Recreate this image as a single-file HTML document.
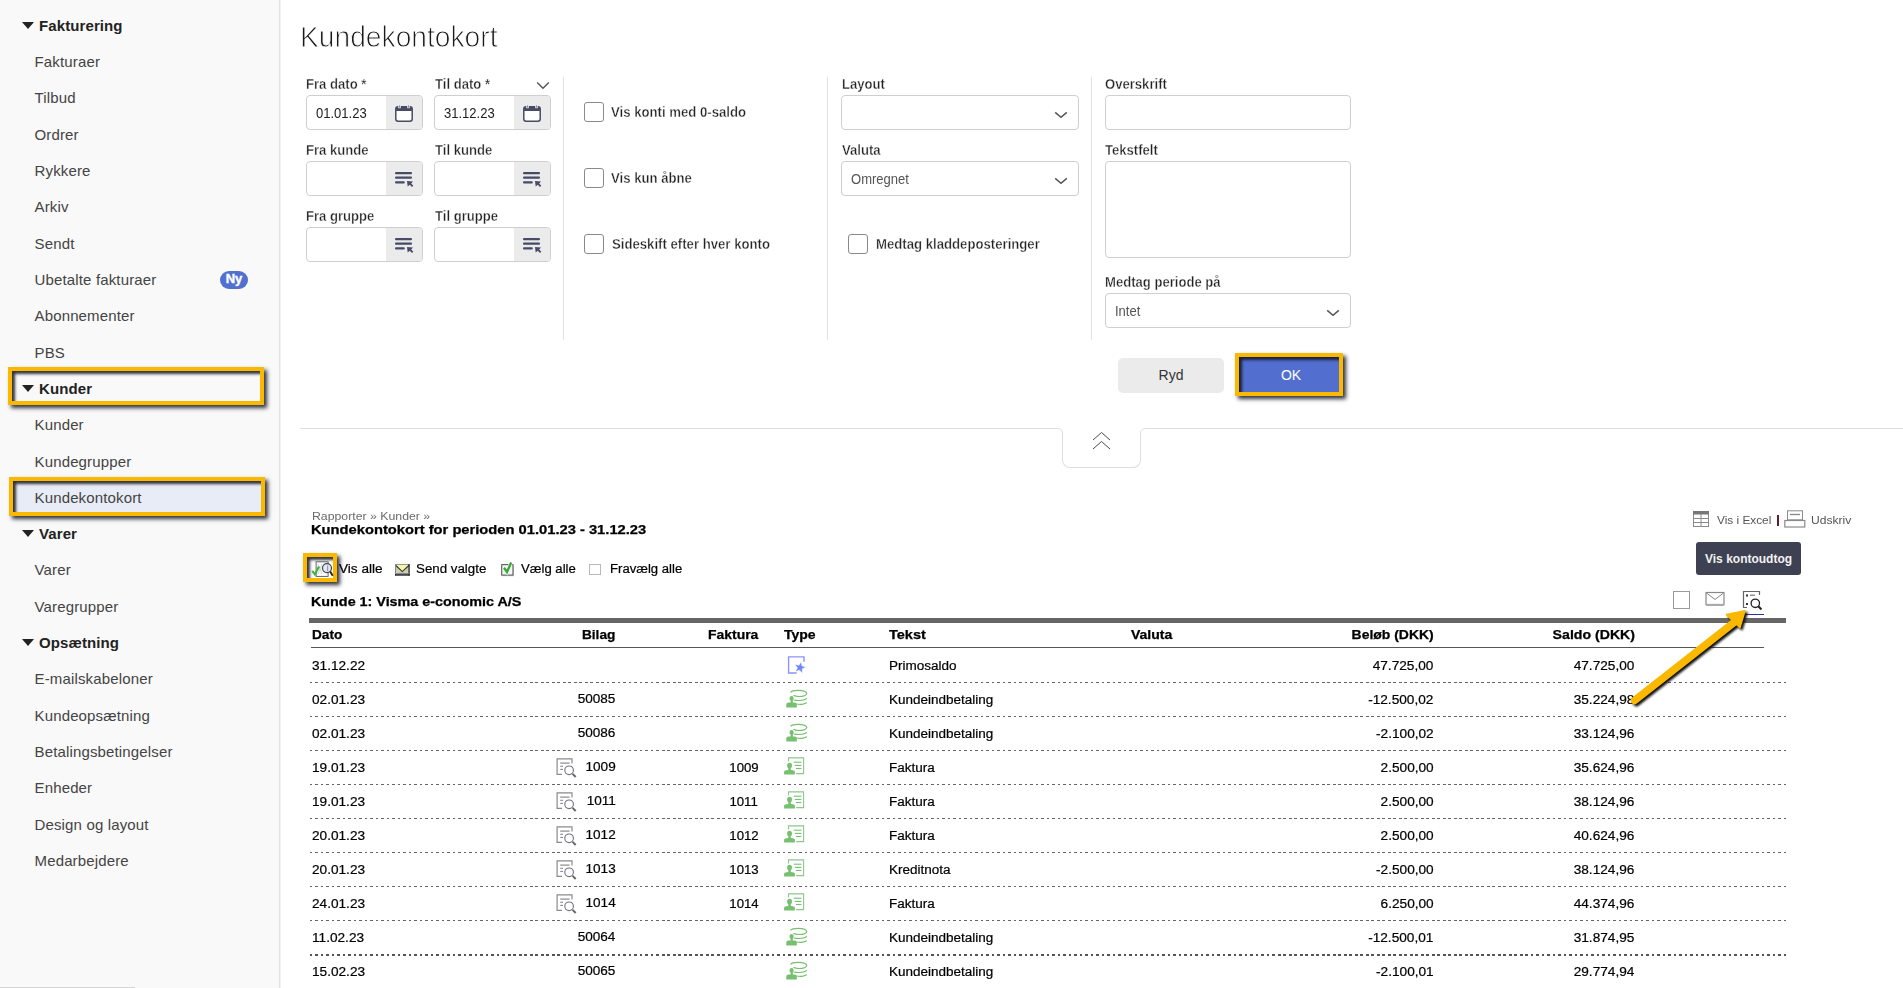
<!DOCTYPE html>
<html><head><meta charset="utf-8"><title>Kundekontokort</title>
<style>
html,body{margin:0;padding:0;}
body{width:1903px;height:988px;overflow:hidden;position:relative;background:#fff;font-family:"Liberation Sans",sans-serif;}
.t{position:absolute;white-space:nowrap;}
svg{display:block;}
</style></head><body>
<div style="position:absolute;left:0px;top:0px;width:279px;height:988px;background:#f9f9f9;"></div>
<div style="position:absolute;left:279px;top:0px;width:1px;height:988px;background:#e3e3e3;"></div>
<div style="position:absolute;left:280px;top:0px;width:1px;height:988px;background:#f2f2f2;"></div>
<div style="position:absolute;left:0px;top:987px;width:135px;height:1px;background:#d4d4d4;"></div>
<div style="position:absolute;left:13px;top:481px;width:248px;height:31px;background:#e8ecf6;"></div>
<div class="t" style="left:39px;top:17.68px;font-size:15px;line-height:15px;color:#222;font-weight:bold;letter-spacing:0.1px;">Fakturering</div>
<svg style="position:absolute;left:22px;top:22px;" width="12" height="7" viewBox="0 0 12 7"><path d="M0 0 L12 0 L6 7 Z" fill="#222"/></svg>
<div class="t" style="left:34.5px;top:54.00px;font-size:15px;line-height:15px;color:#444;letter-spacing:0.15px;">Fakturaer</div>
<div class="t" style="left:34.5px;top:90.32px;font-size:15px;line-height:15px;color:#444;letter-spacing:0.15px;">Tilbud</div>
<div class="t" style="left:34.5px;top:126.64px;font-size:15px;line-height:15px;color:#444;letter-spacing:0.15px;">Ordrer</div>
<div class="t" style="left:34.5px;top:162.96px;font-size:15px;line-height:15px;color:#444;letter-spacing:0.15px;">Rykkere</div>
<div class="t" style="left:34.5px;top:199.28px;font-size:15px;line-height:15px;color:#444;letter-spacing:0.15px;">Arkiv</div>
<div class="t" style="left:34.5px;top:235.60px;font-size:15px;line-height:15px;color:#444;letter-spacing:0.15px;">Sendt</div>
<div class="t" style="left:34.5px;top:271.92px;font-size:15px;line-height:15px;color:#444;letter-spacing:0.15px;">Ubetalte fakturaer</div>
<div class="t" style="left:34.5px;top:308.24px;font-size:15px;line-height:15px;color:#444;letter-spacing:0.15px;">Abonnementer</div>
<div class="t" style="left:34.5px;top:344.56px;font-size:15px;line-height:15px;color:#444;letter-spacing:0.15px;">PBS</div>
<div class="t" style="left:39px;top:380.88px;font-size:15px;line-height:15px;color:#222;font-weight:bold;letter-spacing:0.1px;">Kunder</div>
<svg style="position:absolute;left:22px;top:385px;" width="12" height="7" viewBox="0 0 12 7"><path d="M0 0 L12 0 L6 7 Z" fill="#222"/></svg>
<div class="t" style="left:34.5px;top:417.20px;font-size:15px;line-height:15px;color:#444;letter-spacing:0.15px;">Kunder</div>
<div class="t" style="left:34.5px;top:453.52px;font-size:15px;line-height:15px;color:#444;letter-spacing:0.15px;">Kundegrupper</div>
<div class="t" style="left:34.5px;top:489.84px;font-size:15px;line-height:15px;color:#444;letter-spacing:0.15px;">Kundekontokort</div>
<div class="t" style="left:39px;top:526.16px;font-size:15px;line-height:15px;color:#222;font-weight:bold;letter-spacing:0.1px;">Varer</div>
<svg style="position:absolute;left:22px;top:530px;" width="12" height="7" viewBox="0 0 12 7"><path d="M0 0 L12 0 L6 7 Z" fill="#222"/></svg>
<div class="t" style="left:34.5px;top:562.48px;font-size:15px;line-height:15px;color:#444;letter-spacing:0.15px;">Varer</div>
<div class="t" style="left:34.5px;top:598.80px;font-size:15px;line-height:15px;color:#444;letter-spacing:0.15px;">Varegrupper</div>
<div class="t" style="left:39px;top:635.12px;font-size:15px;line-height:15px;color:#222;font-weight:bold;letter-spacing:0.1px;">Opsætning</div>
<svg style="position:absolute;left:22px;top:639px;" width="12" height="7" viewBox="0 0 12 7"><path d="M0 0 L12 0 L6 7 Z" fill="#222"/></svg>
<div class="t" style="left:34.5px;top:671.44px;font-size:15px;line-height:15px;color:#444;letter-spacing:0.15px;">E-mailskabeloner</div>
<div class="t" style="left:34.5px;top:707.76px;font-size:15px;line-height:15px;color:#444;letter-spacing:0.15px;">Kundeopsætning</div>
<div class="t" style="left:34.5px;top:744.08px;font-size:15px;line-height:15px;color:#444;letter-spacing:0.15px;">Betalingsbetingelser</div>
<div class="t" style="left:34.5px;top:780.40px;font-size:15px;line-height:15px;color:#444;letter-spacing:0.15px;">Enheder</div>
<div class="t" style="left:34.5px;top:816.72px;font-size:15px;line-height:15px;color:#444;letter-spacing:0.15px;">Design og layout</div>
<div class="t" style="left:34.5px;top:853.04px;font-size:15px;line-height:15px;color:#444;letter-spacing:0.15px;">Medarbejdere</div>
<div style="position:absolute;left:220px;top:271px;width:28px;height:18px;border-radius:9px;background:#5270d0;color:#fff;font-weight:bold;font-size:13px;line-height:16px;text-align:center;-webkit-text-stroke:0.4px #fff;">Ny</div>
<div style="position:absolute;left:8px;top:367px;width:248px;height:30px;border:4px solid #fbb800;box-shadow:inset 3px 3px 3px rgba(15,18,30,0.85), 3px 3px 4px rgba(15,18,30,0.85);"></div>
<div style="position:absolute;left:9px;top:477px;width:248px;height:31px;border:4px solid #fbb800;box-shadow:inset 3px 3px 3px rgba(15,18,30,0.85), 3px 3px 4px rgba(15,18,30,0.85);"></div>
<div class="t" style="left:300.4px;top:22.04px;font-size:30.2px;line-height:30.2px;color:#1a1a1a;-webkit-text-stroke:0.95px #fff;transform:scaleX(0.934);transform-origin:left center;">Kundekontokort</div>
<div class="t" style="left:306px;top:76.95px;font-size:14px;line-height:14px;color:#222;font-weight:bold;-webkit-text-stroke:0.35px #fff;transform:scaleX(0.935);transform-origin:left center;">Fra dato *</div>
<div class="t" style="left:434.5px;top:76.95px;font-size:14px;line-height:14px;color:#222;font-weight:bold;-webkit-text-stroke:0.35px #fff;transform:scaleX(0.935);transform-origin:left center;">Til dato *</div>
<div style="position:absolute;left:306px;top:95px;width:115px;height:33px;border:1px solid #cfcfcf;border-radius:4px;background:#fff;overflow:hidden;"><div style="position:absolute;right:0;top:0;width:36px;height:100%;background:#ebebeb;"></div></div>
<div class="t" style="left:315.5px;top:106.15px;font-size:14px;line-height:14px;color:#222;transform:scaleX(0.93);transform-origin:left center;">01.01.23</div>
<svg style="position:absolute;left:395px;top:105px;" width="18" height="17" viewBox="0 0 18 17"><rect x="0.8" y="1.8" width="16.4" height="14.4" rx="2.2" fill="#fff" stroke="#474b66" stroke-width="1.5"/><path d="M0.8 4 Q0.8 1.5 3 1.5 L15 1.5 Q17.2 1.5 17.2 4 L17.2 6 L0.8 6 Z" fill="#474b66"/><rect x="3.2" y="0" width="2.6" height="3.2" fill="#ebebeb"/><rect x="12.2" y="0" width="2.6" height="3.2" fill="#ebebeb"/><rect x="4" y="0.3" width="1" height="2.4" fill="#8a8ca0"/><rect x="13" y="0.3" width="1" height="2.4" fill="#8a8ca0"/></svg>
<div style="position:absolute;left:434px;top:95px;width:115px;height:33px;border:1px solid #cfcfcf;border-radius:4px;background:#fff;overflow:hidden;"><div style="position:absolute;right:0;top:0;width:36px;height:100%;background:#ebebeb;"></div></div>
<div class="t" style="left:443.5px;top:106.15px;font-size:14px;line-height:14px;color:#222;transform:scaleX(0.93);transform-origin:left center;">31.12.23</div>
<svg style="position:absolute;left:523px;top:105px;" width="18" height="17" viewBox="0 0 18 17"><rect x="0.8" y="1.8" width="16.4" height="14.4" rx="2.2" fill="#fff" stroke="#474b66" stroke-width="1.5"/><path d="M0.8 4 Q0.8 1.5 3 1.5 L15 1.5 Q17.2 1.5 17.2 4 L17.2 6 L0.8 6 Z" fill="#474b66"/><rect x="3.2" y="0" width="2.6" height="3.2" fill="#ebebeb"/><rect x="12.2" y="0" width="2.6" height="3.2" fill="#ebebeb"/><rect x="4" y="0.3" width="1" height="2.4" fill="#8a8ca0"/><rect x="13" y="0.3" width="1" height="2.4" fill="#8a8ca0"/></svg>
<div class="t" style="left:306px;top:142.75px;font-size:14px;line-height:14px;color:#222;font-weight:bold;-webkit-text-stroke:0.35px #fff;transform:scaleX(0.935);transform-origin:left center;">Fra kunde</div>
<div class="t" style="left:434.5px;top:142.75px;font-size:14px;line-height:14px;color:#222;font-weight:bold;-webkit-text-stroke:0.35px #fff;transform:scaleX(0.935);transform-origin:left center;">Til kunde</div>
<div style="position:absolute;left:306px;top:161px;width:115px;height:33px;border:1px solid #cfcfcf;border-radius:4px;background:#fff;overflow:hidden;"><div style="position:absolute;right:0;top:0;width:36px;height:100%;background:#ebebeb;"></div></div>
<svg style="position:absolute;left:394px;top:171px;" width="20" height="16" viewBox="0 0 20 16"><rect x="1" y="1" width="17" height="2.2" rx="1" fill="#474b66"/><rect x="1" y="5.5" width="17" height="2.2" rx="1" fill="#474b66"/><rect x="1" y="10.2" width="9.8" height="2.2" rx="1" fill="#474b66"/><path d="M13 10 L19 10.5 L17.2 12.6 L19.3 14.8 L18 16 L15.8 13.8 L13.7 15.6 Z" fill="#474b66"/></svg>
<div style="position:absolute;left:434px;top:161px;width:115px;height:33px;border:1px solid #cfcfcf;border-radius:4px;background:#fff;overflow:hidden;"><div style="position:absolute;right:0;top:0;width:36px;height:100%;background:#ebebeb;"></div></div>
<svg style="position:absolute;left:522px;top:171px;" width="20" height="16" viewBox="0 0 20 16"><rect x="1" y="1" width="17" height="2.2" rx="1" fill="#474b66"/><rect x="1" y="5.5" width="17" height="2.2" rx="1" fill="#474b66"/><rect x="1" y="10.2" width="9.8" height="2.2" rx="1" fill="#474b66"/><path d="M13 10 L19 10.5 L17.2 12.6 L19.3 14.8 L18 16 L15.8 13.8 L13.7 15.6 Z" fill="#474b66"/></svg>
<div class="t" style="left:306px;top:208.75px;font-size:14px;line-height:14px;color:#222;font-weight:bold;-webkit-text-stroke:0.35px #fff;transform:scaleX(0.935);transform-origin:left center;">Fra gruppe</div>
<div class="t" style="left:434.5px;top:208.75px;font-size:14px;line-height:14px;color:#222;font-weight:bold;-webkit-text-stroke:0.35px #fff;transform:scaleX(0.935);transform-origin:left center;">Til gruppe</div>
<div style="position:absolute;left:306px;top:227px;width:115px;height:33px;border:1px solid #cfcfcf;border-radius:4px;background:#fff;overflow:hidden;"><div style="position:absolute;right:0;top:0;width:36px;height:100%;background:#ebebeb;"></div></div>
<svg style="position:absolute;left:394px;top:237px;" width="20" height="16" viewBox="0 0 20 16"><rect x="1" y="1" width="17" height="2.2" rx="1" fill="#474b66"/><rect x="1" y="5.5" width="17" height="2.2" rx="1" fill="#474b66"/><rect x="1" y="10.2" width="9.8" height="2.2" rx="1" fill="#474b66"/><path d="M13 10 L19 10.5 L17.2 12.6 L19.3 14.8 L18 16 L15.8 13.8 L13.7 15.6 Z" fill="#474b66"/></svg>
<div style="position:absolute;left:434px;top:227px;width:115px;height:33px;border:1px solid #cfcfcf;border-radius:4px;background:#fff;overflow:hidden;"><div style="position:absolute;right:0;top:0;width:36px;height:100%;background:#ebebeb;"></div></div>
<svg style="position:absolute;left:522px;top:237px;" width="20" height="16" viewBox="0 0 20 16"><rect x="1" y="1" width="17" height="2.2" rx="1" fill="#474b66"/><rect x="1" y="5.5" width="17" height="2.2" rx="1" fill="#474b66"/><rect x="1" y="10.2" width="9.8" height="2.2" rx="1" fill="#474b66"/><path d="M13 10 L19 10.5 L17.2 12.6 L19.3 14.8 L18 16 L15.8 13.8 L13.7 15.6 Z" fill="#474b66"/></svg>
<svg style="position:absolute;left:536px;top:81px;" width="14" height="9" viewBox="0 0 14 9"><path d="M1.2 1.5 L7 7.2 L12.8 1.5" fill="none" stroke="#555" stroke-width="1.4"/></svg>
<div style="position:absolute;left:563px;top:77px;width:1px;height:263px;background:#e2e2e2;"></div>
<div style="position:absolute;left:827px;top:77px;width:1px;height:263px;background:#e2e2e2;"></div>
<div style="position:absolute;left:1091px;top:77px;width:1px;height:263px;background:#e2e2e2;"></div>
<div style="position:absolute;left:584px;top:102px;width:20px;height:20px;box-sizing:border-box;border:1px solid #8a8a8a;border-radius:3px;background:#fff;"></div>
<div class="t" style="left:611.3px;top:105.35px;font-size:14px;line-height:14px;color:#222;font-weight:bold;-webkit-text-stroke:0.35px #fff;transform:scaleX(0.94);transform-origin:left center;">Vis konti med 0-saldo</div>
<div style="position:absolute;left:584px;top:168px;width:20px;height:20px;box-sizing:border-box;border:1px solid #8a8a8a;border-radius:3px;background:#fff;"></div>
<div class="t" style="left:611.3px;top:170.85px;font-size:14px;line-height:14px;color:#222;font-weight:bold;-webkit-text-stroke:0.35px #fff;transform:scaleX(0.94);transform-origin:left center;">Vis kun åbne</div>
<div style="position:absolute;left:584px;top:234px;width:20px;height:20px;box-sizing:border-box;border:1px solid #8a8a8a;border-radius:3px;background:#fff;"></div>
<div class="t" style="left:612px;top:236.85px;font-size:14px;line-height:14px;color:#222;font-weight:bold;-webkit-text-stroke:0.35px #fff;transform:scaleX(0.94);transform-origin:left center;">Sideskift efter hver konto</div>
<div style="position:absolute;left:848px;top:234px;width:20px;height:20px;box-sizing:border-box;border:1px solid #8a8a8a;border-radius:3px;background:#fff;"></div>
<div class="t" style="left:875.7px;top:236.85px;font-size:14px;line-height:14px;color:#222;font-weight:bold;-webkit-text-stroke:0.35px #fff;transform:scaleX(0.94);transform-origin:left center;">Medtag kladdeposteringer</div>
<div class="t" style="left:841.5px;top:76.95px;font-size:14px;line-height:14px;color:#222;font-weight:bold;-webkit-text-stroke:0.35px #fff;transform:scaleX(0.935);transform-origin:left center;">Layout</div>
<div style="position:absolute;left:841px;top:95px;width:236px;height:33px;border:1px solid #cfcfcf;border-radius:4px;background:#fff;"></div>
<svg style="position:absolute;left:1054px;top:110px;" width="14" height="9" viewBox="0 0 14 9"><path d="M1.2 2.4 L7 7.3 L12.8 2.4" fill="none" stroke="#555" stroke-width="1.5"/></svg>
<div class="t" style="left:841.5px;top:142.75px;font-size:14px;line-height:14px;color:#222;font-weight:bold;-webkit-text-stroke:0.35px #fff;transform:scaleX(0.935);transform-origin:left center;">Valuta</div>
<div style="position:absolute;left:841px;top:161px;width:236px;height:33px;border:1px solid #cfcfcf;border-radius:4px;background:#fff;"></div>
<div class="t" style="left:851px;top:172.15px;font-size:14px;line-height:14px;color:#555;transform:scaleX(0.93);transform-origin:left center;">Omregnet</div>
<svg style="position:absolute;left:1054px;top:176px;" width="14" height="9" viewBox="0 0 14 9"><path d="M1.2 2.4 L7 7.3 L12.8 2.4" fill="none" stroke="#555" stroke-width="1.5"/></svg>
<div class="t" style="left:1105px;top:76.95px;font-size:14px;line-height:14px;color:#222;font-weight:bold;-webkit-text-stroke:0.35px #fff;transform:scaleX(0.935);transform-origin:left center;">Overskrift</div>
<div style="position:absolute;left:1105px;top:95px;width:244px;height:33px;border:1px solid #cfcfcf;border-radius:4px;background:#fff;"></div>
<div class="t" style="left:1105px;top:142.75px;font-size:14px;line-height:14px;color:#222;font-weight:bold;-webkit-text-stroke:0.35px #fff;transform:scaleX(0.935);transform-origin:left center;">Tekstfelt</div>
<div style="position:absolute;left:1105px;top:161px;width:244px;height:95px;border:1px solid #cfcfcf;border-radius:4px;background:#fff;"></div>
<div class="t" style="left:1105px;top:274.95px;font-size:14px;line-height:14px;color:#222;font-weight:bold;-webkit-text-stroke:0.35px #fff;transform:scaleX(0.935);transform-origin:left center;">Medtag periode på</div>
<div style="position:absolute;left:1105px;top:293px;width:244px;height:33px;border:1px solid #cfcfcf;border-radius:4px;background:#fff;"></div>
<div class="t" style="left:1115px;top:304.15px;font-size:14px;line-height:14px;color:#555;transform:scaleX(0.93);transform-origin:left center;">Intet</div>
<svg style="position:absolute;left:1326px;top:308px;" width="14" height="9" viewBox="0 0 14 9"><path d="M1.2 2.4 L7 7.3 L12.8 2.4" fill="none" stroke="#555" stroke-width="1.5"/></svg>
<div style="position:absolute;left:1118px;top:358px;width:106px;height:35px;border-radius:5px;background:#ebebeb;"></div>
<div class="t" style="left:1171px;top:367.85px;font-size:14px;line-height:14px;color:#333;transform:translateX(-50%);">Ryd</div>
<div style="position:absolute;left:1239px;top:357px;width:100px;height:35px;background:#526fd0;"></div>
<div style="position:absolute;left:1235px;top:353px;width:100px;height:35px;border:4px solid #fbb800;box-shadow:inset 3px 3px 3px rgba(15,18,30,0.85), 3px 3px 4px rgba(15,18,30,0.85);"></div>
<div class="t" style="left:1291px;top:368.15px;font-size:14px;line-height:14px;color:#fff;transform:translateX(-50%);">OK</div>
<div style="position:absolute;left:300px;top:428px;width:757px;height:1px;background:#dedede;"></div>
<div style="position:absolute;left:1146px;top:428px;width:757px;height:1px;background:#dedede;"></div>
<div style="position:absolute;left:1062px;top:432px;width:77px;height:35px;border:1px solid #dedede;border-top:none;border-radius:0 0 8px 8px;background:#fff;"></div>
<svg style="position:absolute;left:1057px;top:428px;" width="6" height="5" viewBox="0 0 6 5"><path d="M0 0.5 Q5.5 0.5 5.5 5" fill="none" stroke="#dedede" stroke-width="1"/></svg>
<svg style="position:absolute;left:1140px;top:428px;" width="6" height="5" viewBox="0 0 6 5"><path d="M6 0.5 Q0.5 0.5 0.5 5" fill="none" stroke="#dedede" stroke-width="1"/></svg>
<svg style="position:absolute;left:1092px;top:431px;" width="19" height="20" viewBox="0 0 19 20"><path d="M1 9 L9.5 1.5 L18 9" fill="none" stroke="#4a4a4a" stroke-width="1"/><path d="M1 18 L9.5 10.5 L18 18" fill="none" stroke="#4a4a4a" stroke-width="1"/></svg>
<div class="t" style="left:311.5px;top:510.69px;font-size:11px;line-height:11px;color:#6a6a6a;transform:scaleX(1.117);transform-origin:left center;">Rapporter » Kunder »</div>
<div class="t" style="left:311px;top:523.84px;font-size:12px;line-height:12px;color:#000;font-weight:bold;-webkit-text-stroke:0.25px #000;transform:scaleX(1.226);transform-origin:left center;">Kundekontokort for perioden 01.01.23 - 31.12.23</div>
<svg style="position:absolute;left:1692px;top:510px;" width="18" height="18" viewBox="0 0 18 18"><rect x="1.5" y="1.5" width="15" height="15" fill="none" stroke="#8a8a8a" stroke-width="1"/><rect x="1" y="1" width="16" height="3.5" fill="#777"/><line x1="1" y1="8.5" x2="17" y2="8.5" stroke="#8a8a8a"/><line x1="1" y1="12.5" x2="17" y2="12.5" stroke="#8a8a8a"/><line x1="9" y1="4" x2="9" y2="17" stroke="#8a8a8a"/></svg>
<div class="t" style="left:1717px;top:514.69px;font-size:11px;line-height:11px;color:#555;transform:scaleX(1.075);transform-origin:left center;">Vis i Excel</div>
<div style="position:absolute;left:1777px;top:515px;width:1.6px;height:11px;background:#5a2030;"></div>
<svg style="position:absolute;left:1784px;top:510px;" width="22" height="18" viewBox="0 0 22 18"><rect x="3.5" y="0.8" width="15" height="9" fill="none" stroke="#8a8a8a" stroke-width="1"/><line x1="6" y1="4.5" x2="16" y2="4.5" stroke="#888" stroke-width="1.3"/><rect x="0.8" y="10.5" width="20" height="6.5" fill="none" stroke="#8a8a8a" stroke-width="1.2"/></svg>
<div class="t" style="left:1810.5px;top:514.69px;font-size:11px;line-height:11px;color:#555;transform:scaleX(1.1);transform-origin:left center;">Udskriv</div>
<div style="position:absolute;left:1696px;top:542px;width:105px;height:33px;border-radius:3px;background:#3e4152;"></div>
<div class="t" style="left:1705px;top:552.84px;font-size:12px;line-height:12px;color:#f2f2f2;font-weight:bold;">Vis kontoudtog</div>
<div style="position:absolute;left:303px;top:553px;width:26px;height:21px;border:4px solid #fbb800;box-shadow:inset 3px 3px 3px rgba(15,18,30,0.85), 3px 3px 4px rgba(15,18,30,0.85);"></div>
<svg style="position:absolute;left:311px;top:560px;" width="23" height="18" viewBox="0 0 23 18"><rect x="5.1" y="1.8" width="12" height="14.6" fill="#fafafa" stroke="#555" stroke-width="0.9"/><path d="M7 4 L11 14 M11 4 L7 14" stroke="#bbb" stroke-width="0.6"/><circle cx="16" cy="8.1" r="4.5" fill="#e4eaf6" stroke="#444" stroke-width="1.2"/><line x1="16.6" y1="5.5" x2="16.6" y2="11" stroke="#8a9ad0" stroke-width="1.3"/><line x1="19.2" y1="11.6" x2="21.7" y2="15.8" stroke="#222" stroke-width="1.9"/><path d="M1.2 10.8 L3.9 14.4 L8 6.5" fill="none" stroke="#3cb43c" stroke-width="2.1"/></svg>
<div class="t" style="left:338.5px;top:562.84px;font-size:12px;line-height:12px;color:#000;-webkit-text-stroke:0.2px #000;transform:scaleX(1.133);transform-origin:left center;">Vis alle</div>
<svg style="position:absolute;left:395px;top:564px;" width="15" height="12" viewBox="0 0 15 12"><rect x="0" y="0" width="14.6" height="11.6" fill="#c4c6d0"/><path d="M1 9.5 L5.5 5.5 M13.6 9.5 L9.1 5.5" stroke="#e0e070" stroke-width="1.2"/><path d="M0.8 0.8 L7.3 7.3 L13.8 0.8 Z" fill="#f6f6a8"/><path d="M0.8 1.5 L7.3 7.6 L13.8 1.5" fill="none" stroke="#3a3a20" stroke-width="1.1"/><rect x="0" y="0" width="14.6" height="1" fill="#999"/><rect x="0" y="0" width="1" height="11.6" fill="#888"/><rect x="13.5" y="0" width="1.1" height="11.6" fill="#111"/><rect x="0" y="10.2" width="14.6" height="1.4" fill="#1a1a1a"/><rect x="1" y="9" width="12.5" height="1.2" fill="#888"/></svg>
<div class="t" style="left:415.5px;top:562.84px;font-size:12px;line-height:12px;color:#000;-webkit-text-stroke:0.2px #000;transform:scaleX(1.109);transform-origin:left center;">Send valgte</div>
<svg style="position:absolute;left:501px;top:561px;" width="15" height="16" viewBox="0 0 15 16"><rect x="1.5" y="4.5" width="11.5" height="10.8" fill="#d8dcdc"/><rect x="0.7" y="3.6" width="11.3" height="10.5" fill="#f4f4f4" stroke="#5a5a5a" stroke-width="1.1"/><path d="M3 6.8 L6 11 L10.2 1.6" fill="none" stroke="#fff" stroke-width="3.6"/><path d="M3 6.8 L6 11 L10.2 1.6" fill="none" stroke="#38a838" stroke-width="2.4"/></svg>
<div class="t" style="left:520.5px;top:562.84px;font-size:12px;line-height:12px;color:#000;-webkit-text-stroke:0.2px #000;transform:scaleX(1.096);transform-origin:left center;">Vælg alle</div>
<div style="position:absolute;left:589px;top:564px;width:12px;height:11px;box-sizing:border-box;border:1.3px solid #b8b8b8;background:#fff;"></div>
<div class="t" style="left:609.5px;top:562.84px;font-size:12px;line-height:12px;color:#000;-webkit-text-stroke:0.2px #000;transform:scaleX(1.094);transform-origin:left center;">Fravælg alle</div>
<div class="t" style="left:311px;top:596.24px;font-size:12px;line-height:12px;color:#000;font-weight:bold;-webkit-text-stroke:0.25px #000;transform:scaleX(1.195);transform-origin:left center;">Kunde 1: Visma e-conomic A/S</div>
<div style="position:absolute;left:1673px;top:591px;width:17px;height:18px;box-sizing:border-box;border:1.2px solid #9a9a9a;background:#fff;"></div>
<svg style="position:absolute;left:1705px;top:591px;" width="21" height="17" viewBox="0 0 21 17"><rect x="1" y="1.5" width="18" height="12" fill="#fff" stroke="#888" stroke-width="1.2"/><path d="M1.5 2 L10 8.5 L18.5 2" fill="none" stroke="#888" stroke-width="1"/><rect x="1" y="13" width="18" height="2" fill="#aaa"/></svg>
<svg style="position:absolute;left:1742px;top:590px;" width="24" height="22" viewBox="0 0 24 22"><path d="M5 17.5 L1.5 17.5 L1.5 1.5 L17.5 1.5 L17.5 5" fill="none" stroke="#666" stroke-width="1.2"/><rect x="4" y="4.5" width="2" height="2" fill="#333"/><rect x="8" y="4.6" width="5" height="1.2" fill="#777"/><rect x="4" y="13" width="2" height="2" fill="#333"/><circle cx="13.3" cy="13.3" r="4.2" fill="none" stroke="#222" stroke-width="1.3"/><line x1="16.3" y1="16.3" x2="19.5" y2="19.5" stroke="#222" stroke-width="2"/></svg>
<div style="position:absolute;left:1745px;top:614px;width:19px;height:1.3px;background:#3030a0;"></div>
<div style="position:absolute;left:309px;top:618px;width:1477px;height:5px;background:#666;"></div>
<div class="t" style="left:311.5px;top:629.04px;font-size:12px;line-height:12px;color:#000;font-weight:bold;-webkit-text-stroke:0.25px #000;transform:scaleX(1.133);transform-origin:left center;">Dato</div>
<div class="t" style="right:1287.3px;top:629.04px;font-size:12px;line-height:12px;color:#000;font-weight:bold;-webkit-text-stroke:0.25px #000;transform:scaleX(1.138);transform-origin:right center;">Bilag</div>
<div class="t" style="right:1144.8px;top:629.04px;font-size:12px;line-height:12px;color:#000;font-weight:bold;-webkit-text-stroke:0.25px #000;transform:scaleX(1.161);transform-origin:right center;">Faktura</div>
<div class="t" style="left:783.9px;top:629.04px;font-size:12px;line-height:12px;color:#000;font-weight:bold;-webkit-text-stroke:0.25px #000;transform:scaleX(1.167);transform-origin:left center;">Type</div>
<div class="t" style="left:889.4px;top:629.04px;font-size:12px;line-height:12px;color:#000;font-weight:bold;-webkit-text-stroke:0.25px #000;transform:scaleX(1.21);transform-origin:left center;">Tekst</div>
<div class="t" style="left:1131.1px;top:629.04px;font-size:12px;line-height:12px;color:#000;font-weight:bold;-webkit-text-stroke:0.25px #000;transform:scaleX(1.167);transform-origin:left center;">Valuta</div>
<div class="t" style="right:469.4000000000001px;top:629.04px;font-size:12px;line-height:12px;color:#000;font-weight:bold;-webkit-text-stroke:0.25px #000;transform:scaleX(1.161);transform-origin:right center;">Beløb (DKK)</div>
<div class="t" style="right:268.5px;top:629.04px;font-size:12px;line-height:12px;color:#000;font-weight:bold;-webkit-text-stroke:0.25px #000;transform:scaleX(1.177);transform-origin:right center;">Saldo (DKK)</div>
<div style="position:absolute;left:311px;top:647px;width:1453px;height:1px;background:#555;"></div>
<div class="t" style="left:311.5px;top:659.94px;font-size:12px;line-height:12px;color:#000;-webkit-text-stroke:0.2px #000;transform:scaleX(1.136);transform-origin:left center;">31.12.22</div>
<svg style="position:absolute;left:784px;top:655px;" width="24" height="21" viewBox="0 0 24 21"><path d="M12.7 18 L4.6 18 L4.6 1.9 L20 1.9 L20 6.7" fill="none" stroke="#8c94ff" stroke-width="1.4"/><path d="M17.29 6.54 L17.93 10.86 L22.17 11.95 L18.25 13.90 L18.52 18.26 L15.46 15.14 L11.39 16.75 L13.41 12.87 L10.63 9.50 L14.94 10.22 Z" fill="#7186f7" stroke="#fff" stroke-width="0.6"/></svg>
<div class="t" style="left:889.4px;top:659.94px;font-size:12px;line-height:12px;color:#000;-webkit-text-stroke:0.2px #000;transform:scaleX(1.125);transform-origin:left center;">Primosaldo</div>
<div class="t" style="right:469.4000000000001px;top:659.94px;font-size:12px;line-height:12px;color:#000;-webkit-text-stroke:0.2px #000;transform:scaleX(1.137);transform-origin:right center;">47.725,00</div>
<div class="t" style="right:268.5px;top:659.94px;font-size:12px;line-height:12px;color:#000;-webkit-text-stroke:0.2px #000;transform:scaleX(1.137);transform-origin:right center;">47.725,00</div>
<div style="position:absolute;left:310px;top:682px;width:1476px;height:1px;background:repeating-linear-gradient(90deg,#666 0 2.5px,transparent 2.5px 5.5px);"></div>
<div class="t" style="left:311.5px;top:693.94px;font-size:12px;line-height:12px;color:#000;-webkit-text-stroke:0.2px #000;transform:scaleX(1.136);transform-origin:left center;">02.01.23</div>
<div class="t" style="right:1287.3px;top:692.94px;font-size:12px;line-height:12px;color:#000;-webkit-text-stroke:0.2px #000;transform:scaleX(1.13);transform-origin:right center;">50085</div>
<svg style="position:absolute;left:784px;top:689px;" width="24" height="21" viewBox="0 0 24 21"><path d="M6.5 3.4 Q8 1.2 14.5 1.3 Q22 1.4 22.8 4.3 Q22 7.5 15 7.5 Q11 7.4 9.5 6.2" fill="none" stroke="#76c06f" stroke-width="1.2"/><path d="M9.8 11 Q12 11.6 15 11.5 Q21.5 11.3 22.8 9" fill="none" stroke="#76c06f" stroke-width="1.2"/><path d="M12.5 15 Q16 15.6 18 15.3 Q22 14.6 22.8 13.6" fill="none" stroke="#76c06f" stroke-width="1.2"/><path d="M2.3 18.6 L2.3 15.2 Q2.3 13.8 4.5 13.6 L6.6 13.4 L6.6 11.8 Q5.5 11 5.5 9.2 Q5.5 7 7.6 7 Q9.7 7 9.7 9.2 Q9.7 11 8.8 11.8 L8.8 13.4 L10.8 13.6 Q12.8 14 12.8 15.2 L12.8 18.6 Z" fill="#76c06f"/></svg>
<div class="t" style="left:889.4px;top:693.94px;font-size:12px;line-height:12px;color:#000;-webkit-text-stroke:0.2px #000;transform:scaleX(1.125);transform-origin:left center;">Kundeindbetaling</div>
<div class="t" style="right:469.4000000000001px;top:693.94px;font-size:12px;line-height:12px;color:#000;-webkit-text-stroke:0.2px #000;transform:scaleX(1.137);transform-origin:right center;">-12.500,02</div>
<div class="t" style="right:268.5px;top:693.94px;font-size:12px;line-height:12px;color:#000;-webkit-text-stroke:0.2px #000;transform:scaleX(1.137);transform-origin:right center;">35.224,98</div>
<div style="position:absolute;left:310px;top:716px;width:1476px;height:1px;background:repeating-linear-gradient(90deg,#666 0 2.5px,transparent 2.5px 5.5px);"></div>
<div class="t" style="left:311.5px;top:727.94px;font-size:12px;line-height:12px;color:#000;-webkit-text-stroke:0.2px #000;transform:scaleX(1.136);transform-origin:left center;">02.01.23</div>
<div class="t" style="right:1287.3px;top:726.94px;font-size:12px;line-height:12px;color:#000;-webkit-text-stroke:0.2px #000;transform:scaleX(1.13);transform-origin:right center;">50086</div>
<svg style="position:absolute;left:784px;top:723px;" width="24" height="21" viewBox="0 0 24 21"><path d="M6.5 3.4 Q8 1.2 14.5 1.3 Q22 1.4 22.8 4.3 Q22 7.5 15 7.5 Q11 7.4 9.5 6.2" fill="none" stroke="#76c06f" stroke-width="1.2"/><path d="M9.8 11 Q12 11.6 15 11.5 Q21.5 11.3 22.8 9" fill="none" stroke="#76c06f" stroke-width="1.2"/><path d="M12.5 15 Q16 15.6 18 15.3 Q22 14.6 22.8 13.6" fill="none" stroke="#76c06f" stroke-width="1.2"/><path d="M2.3 18.6 L2.3 15.2 Q2.3 13.8 4.5 13.6 L6.6 13.4 L6.6 11.8 Q5.5 11 5.5 9.2 Q5.5 7 7.6 7 Q9.7 7 9.7 9.2 Q9.7 11 8.8 11.8 L8.8 13.4 L10.8 13.6 Q12.8 14 12.8 15.2 L12.8 18.6 Z" fill="#76c06f"/></svg>
<div class="t" style="left:889.4px;top:727.94px;font-size:12px;line-height:12px;color:#000;-webkit-text-stroke:0.2px #000;transform:scaleX(1.125);transform-origin:left center;">Kundeindbetaling</div>
<div class="t" style="right:469.4000000000001px;top:727.94px;font-size:12px;line-height:12px;color:#000;-webkit-text-stroke:0.2px #000;transform:scaleX(1.137);transform-origin:right center;">-2.100,02</div>
<div class="t" style="right:268.5px;top:727.94px;font-size:12px;line-height:12px;color:#000;-webkit-text-stroke:0.2px #000;transform:scaleX(1.137);transform-origin:right center;">33.124,96</div>
<div style="position:absolute;left:310px;top:750px;width:1476px;height:1px;background:repeating-linear-gradient(90deg,#666 0 2.5px,transparent 2.5px 5.5px);"></div>
<div class="t" style="left:311.5px;top:761.94px;font-size:12px;line-height:12px;color:#000;-webkit-text-stroke:0.2px #000;transform:scaleX(1.136);transform-origin:left center;">19.01.23</div>
<div class="t" style="right:1287.3px;top:760.94px;font-size:12px;line-height:12px;color:#000;-webkit-text-stroke:0.2px #000;transform:scaleX(1.13);transform-origin:right center;">1009</div>
<svg style="position:absolute;left:556px;top:758px;" width="21" height="20" viewBox="0 0 21 20"><path d="M6 16.4 L1.1 16.4 L1.1 0.9 L16 0.9 L16 5.4" fill="none" stroke="#8a8a8a" stroke-width="1.2"/><line x1="4.2" y1="5.1" x2="13.6" y2="5.1" stroke="#8a8a8a" stroke-width="1.2"/><line x1="4.2" y1="8.3" x2="7" y2="8.3" stroke="#8a8a8a" stroke-width="1.1"/><line x1="4.2" y1="11.4" x2="7" y2="11.4" stroke="#8a8a8a" stroke-width="1.1"/><circle cx="13.1" cy="12.3" r="4.3" fill="none" stroke="#707080" stroke-width="1.1"/><line x1="16.6" y1="15.9" x2="19.7" y2="19" stroke="#666" stroke-width="2"/></svg>
<div class="t" style="right:1144.8px;top:761.94px;font-size:12px;line-height:12px;color:#000;-webkit-text-stroke:0.2px #000;transform:scaleX(1.1);transform-origin:right center;">1009</div>
<svg style="position:absolute;left:784px;top:757px;" width="24" height="21" viewBox="0 0 24 21"><path d="M4.5 4.6 L4.5 0.9 L19.6 0.9 L19.6 16.6 L12.2 16.6" fill="none" stroke="#8cc88a" stroke-width="1.1"/><line x1="9.8" y1="5.2" x2="17.4" y2="5.2" stroke="#76c06f" stroke-width="1.1"/><line x1="10.8" y1="8.4" x2="17.4" y2="8.4" stroke="#76c06f" stroke-width="1.1"/><line x1="11.9" y1="11.5" x2="17.4" y2="11.5" stroke="#76c06f" stroke-width="1.1"/><path d="M0.1 17.5 L0.1 14.6 Q0.1 13.4 2.5 13.2 L4.3 13 L4.3 11.3 Q3.1 10.3 3.1 8.4 Q3.1 5.8 5.55 5.8 Q8 5.8 8 8.4 Q8 10.3 6.8 11.3 L6.8 13 L8.6 13.2 Q10.9 13.4 10.9 14.6 L10.9 17.5 Z" fill="#76c06f"/></svg>
<div class="t" style="left:889.4px;top:761.94px;font-size:12px;line-height:12px;color:#000;-webkit-text-stroke:0.2px #000;transform:scaleX(1.125);transform-origin:left center;">Faktura</div>
<div class="t" style="right:469.4000000000001px;top:761.94px;font-size:12px;line-height:12px;color:#000;-webkit-text-stroke:0.2px #000;transform:scaleX(1.137);transform-origin:right center;">2.500,00</div>
<div class="t" style="right:268.5px;top:761.94px;font-size:12px;line-height:12px;color:#000;-webkit-text-stroke:0.2px #000;transform:scaleX(1.137);transform-origin:right center;">35.624,96</div>
<div style="position:absolute;left:310px;top:784px;width:1476px;height:1px;background:repeating-linear-gradient(90deg,#666 0 2.5px,transparent 2.5px 5.5px);"></div>
<div class="t" style="left:311.5px;top:795.94px;font-size:12px;line-height:12px;color:#000;-webkit-text-stroke:0.2px #000;transform:scaleX(1.136);transform-origin:left center;">19.01.23</div>
<div class="t" style="right:1287.3px;top:794.94px;font-size:12px;line-height:12px;color:#000;-webkit-text-stroke:0.2px #000;transform:scaleX(1.13);transform-origin:right center;">1011</div>
<svg style="position:absolute;left:556px;top:792px;" width="21" height="20" viewBox="0 0 21 20"><path d="M6 16.4 L1.1 16.4 L1.1 0.9 L16 0.9 L16 5.4" fill="none" stroke="#8a8a8a" stroke-width="1.2"/><line x1="4.2" y1="5.1" x2="13.6" y2="5.1" stroke="#8a8a8a" stroke-width="1.2"/><line x1="4.2" y1="8.3" x2="7" y2="8.3" stroke="#8a8a8a" stroke-width="1.1"/><line x1="4.2" y1="11.4" x2="7" y2="11.4" stroke="#8a8a8a" stroke-width="1.1"/><circle cx="13.1" cy="12.3" r="4.3" fill="none" stroke="#707080" stroke-width="1.1"/><line x1="16.6" y1="15.9" x2="19.7" y2="19" stroke="#666" stroke-width="2"/></svg>
<div class="t" style="right:1144.8px;top:795.94px;font-size:12px;line-height:12px;color:#000;-webkit-text-stroke:0.2px #000;transform:scaleX(1.1);transform-origin:right center;">1011</div>
<svg style="position:absolute;left:784px;top:791px;" width="24" height="21" viewBox="0 0 24 21"><path d="M4.5 4.6 L4.5 0.9 L19.6 0.9 L19.6 16.6 L12.2 16.6" fill="none" stroke="#8cc88a" stroke-width="1.1"/><line x1="9.8" y1="5.2" x2="17.4" y2="5.2" stroke="#76c06f" stroke-width="1.1"/><line x1="10.8" y1="8.4" x2="17.4" y2="8.4" stroke="#76c06f" stroke-width="1.1"/><line x1="11.9" y1="11.5" x2="17.4" y2="11.5" stroke="#76c06f" stroke-width="1.1"/><path d="M0.1 17.5 L0.1 14.6 Q0.1 13.4 2.5 13.2 L4.3 13 L4.3 11.3 Q3.1 10.3 3.1 8.4 Q3.1 5.8 5.55 5.8 Q8 5.8 8 8.4 Q8 10.3 6.8 11.3 L6.8 13 L8.6 13.2 Q10.9 13.4 10.9 14.6 L10.9 17.5 Z" fill="#76c06f"/></svg>
<div class="t" style="left:889.4px;top:795.94px;font-size:12px;line-height:12px;color:#000;-webkit-text-stroke:0.2px #000;transform:scaleX(1.125);transform-origin:left center;">Faktura</div>
<div class="t" style="right:469.4000000000001px;top:795.94px;font-size:12px;line-height:12px;color:#000;-webkit-text-stroke:0.2px #000;transform:scaleX(1.137);transform-origin:right center;">2.500,00</div>
<div class="t" style="right:268.5px;top:795.94px;font-size:12px;line-height:12px;color:#000;-webkit-text-stroke:0.2px #000;transform:scaleX(1.137);transform-origin:right center;">38.124,96</div>
<div style="position:absolute;left:310px;top:818px;width:1476px;height:1px;background:repeating-linear-gradient(90deg,#666 0 2.5px,transparent 2.5px 5.5px);"></div>
<div class="t" style="left:311.5px;top:829.94px;font-size:12px;line-height:12px;color:#000;-webkit-text-stroke:0.2px #000;transform:scaleX(1.136);transform-origin:left center;">20.01.23</div>
<div class="t" style="right:1287.3px;top:828.94px;font-size:12px;line-height:12px;color:#000;-webkit-text-stroke:0.2px #000;transform:scaleX(1.13);transform-origin:right center;">1012</div>
<svg style="position:absolute;left:556px;top:826px;" width="21" height="20" viewBox="0 0 21 20"><path d="M6 16.4 L1.1 16.4 L1.1 0.9 L16 0.9 L16 5.4" fill="none" stroke="#8a8a8a" stroke-width="1.2"/><line x1="4.2" y1="5.1" x2="13.6" y2="5.1" stroke="#8a8a8a" stroke-width="1.2"/><line x1="4.2" y1="8.3" x2="7" y2="8.3" stroke="#8a8a8a" stroke-width="1.1"/><line x1="4.2" y1="11.4" x2="7" y2="11.4" stroke="#8a8a8a" stroke-width="1.1"/><circle cx="13.1" cy="12.3" r="4.3" fill="none" stroke="#707080" stroke-width="1.1"/><line x1="16.6" y1="15.9" x2="19.7" y2="19" stroke="#666" stroke-width="2"/></svg>
<div class="t" style="right:1144.8px;top:829.94px;font-size:12px;line-height:12px;color:#000;-webkit-text-stroke:0.2px #000;transform:scaleX(1.1);transform-origin:right center;">1012</div>
<svg style="position:absolute;left:784px;top:825px;" width="24" height="21" viewBox="0 0 24 21"><path d="M4.5 4.6 L4.5 0.9 L19.6 0.9 L19.6 16.6 L12.2 16.6" fill="none" stroke="#8cc88a" stroke-width="1.1"/><line x1="9.8" y1="5.2" x2="17.4" y2="5.2" stroke="#76c06f" stroke-width="1.1"/><line x1="10.8" y1="8.4" x2="17.4" y2="8.4" stroke="#76c06f" stroke-width="1.1"/><line x1="11.9" y1="11.5" x2="17.4" y2="11.5" stroke="#76c06f" stroke-width="1.1"/><path d="M0.1 17.5 L0.1 14.6 Q0.1 13.4 2.5 13.2 L4.3 13 L4.3 11.3 Q3.1 10.3 3.1 8.4 Q3.1 5.8 5.55 5.8 Q8 5.8 8 8.4 Q8 10.3 6.8 11.3 L6.8 13 L8.6 13.2 Q10.9 13.4 10.9 14.6 L10.9 17.5 Z" fill="#76c06f"/></svg>
<div class="t" style="left:889.4px;top:829.94px;font-size:12px;line-height:12px;color:#000;-webkit-text-stroke:0.2px #000;transform:scaleX(1.125);transform-origin:left center;">Faktura</div>
<div class="t" style="right:469.4000000000001px;top:829.94px;font-size:12px;line-height:12px;color:#000;-webkit-text-stroke:0.2px #000;transform:scaleX(1.137);transform-origin:right center;">2.500,00</div>
<div class="t" style="right:268.5px;top:829.94px;font-size:12px;line-height:12px;color:#000;-webkit-text-stroke:0.2px #000;transform:scaleX(1.137);transform-origin:right center;">40.624,96</div>
<div style="position:absolute;left:310px;top:852px;width:1476px;height:1px;background:repeating-linear-gradient(90deg,#666 0 2.5px,transparent 2.5px 5.5px);"></div>
<div class="t" style="left:311.5px;top:863.94px;font-size:12px;line-height:12px;color:#000;-webkit-text-stroke:0.2px #000;transform:scaleX(1.136);transform-origin:left center;">20.01.23</div>
<div class="t" style="right:1287.3px;top:862.94px;font-size:12px;line-height:12px;color:#000;-webkit-text-stroke:0.2px #000;transform:scaleX(1.13);transform-origin:right center;">1013</div>
<svg style="position:absolute;left:556px;top:860px;" width="21" height="20" viewBox="0 0 21 20"><path d="M6 16.4 L1.1 16.4 L1.1 0.9 L16 0.9 L16 5.4" fill="none" stroke="#8a8a8a" stroke-width="1.2"/><line x1="4.2" y1="5.1" x2="13.6" y2="5.1" stroke="#8a8a8a" stroke-width="1.2"/><line x1="4.2" y1="8.3" x2="7" y2="8.3" stroke="#8a8a8a" stroke-width="1.1"/><line x1="4.2" y1="11.4" x2="7" y2="11.4" stroke="#8a8a8a" stroke-width="1.1"/><circle cx="13.1" cy="12.3" r="4.3" fill="none" stroke="#707080" stroke-width="1.1"/><line x1="16.6" y1="15.9" x2="19.7" y2="19" stroke="#666" stroke-width="2"/></svg>
<div class="t" style="right:1144.8px;top:863.94px;font-size:12px;line-height:12px;color:#000;-webkit-text-stroke:0.2px #000;transform:scaleX(1.1);transform-origin:right center;">1013</div>
<svg style="position:absolute;left:784px;top:859px;" width="24" height="21" viewBox="0 0 24 21"><path d="M4.5 4.6 L4.5 0.9 L19.6 0.9 L19.6 16.6 L12.2 16.6" fill="none" stroke="#8cc88a" stroke-width="1.1"/><line x1="9.8" y1="5.2" x2="17.4" y2="5.2" stroke="#76c06f" stroke-width="1.1"/><line x1="10.8" y1="8.4" x2="17.4" y2="8.4" stroke="#76c06f" stroke-width="1.1"/><line x1="11.9" y1="11.5" x2="17.4" y2="11.5" stroke="#76c06f" stroke-width="1.1"/><path d="M0.1 17.5 L0.1 14.6 Q0.1 13.4 2.5 13.2 L4.3 13 L4.3 11.3 Q3.1 10.3 3.1 8.4 Q3.1 5.8 5.55 5.8 Q8 5.8 8 8.4 Q8 10.3 6.8 11.3 L6.8 13 L8.6 13.2 Q10.9 13.4 10.9 14.6 L10.9 17.5 Z" fill="#76c06f"/></svg>
<div class="t" style="left:889.4px;top:863.94px;font-size:12px;line-height:12px;color:#000;-webkit-text-stroke:0.2px #000;transform:scaleX(1.125);transform-origin:left center;">Kreditnota</div>
<div class="t" style="right:469.4000000000001px;top:863.94px;font-size:12px;line-height:12px;color:#000;-webkit-text-stroke:0.2px #000;transform:scaleX(1.137);transform-origin:right center;">-2.500,00</div>
<div class="t" style="right:268.5px;top:863.94px;font-size:12px;line-height:12px;color:#000;-webkit-text-stroke:0.2px #000;transform:scaleX(1.137);transform-origin:right center;">38.124,96</div>
<div style="position:absolute;left:310px;top:886px;width:1476px;height:1px;background:repeating-linear-gradient(90deg,#666 0 2.5px,transparent 2.5px 5.5px);"></div>
<div class="t" style="left:311.5px;top:897.94px;font-size:12px;line-height:12px;color:#000;-webkit-text-stroke:0.2px #000;transform:scaleX(1.136);transform-origin:left center;">24.01.23</div>
<div class="t" style="right:1287.3px;top:896.94px;font-size:12px;line-height:12px;color:#000;-webkit-text-stroke:0.2px #000;transform:scaleX(1.13);transform-origin:right center;">1014</div>
<svg style="position:absolute;left:556px;top:894px;" width="21" height="20" viewBox="0 0 21 20"><path d="M6 16.4 L1.1 16.4 L1.1 0.9 L16 0.9 L16 5.4" fill="none" stroke="#8a8a8a" stroke-width="1.2"/><line x1="4.2" y1="5.1" x2="13.6" y2="5.1" stroke="#8a8a8a" stroke-width="1.2"/><line x1="4.2" y1="8.3" x2="7" y2="8.3" stroke="#8a8a8a" stroke-width="1.1"/><line x1="4.2" y1="11.4" x2="7" y2="11.4" stroke="#8a8a8a" stroke-width="1.1"/><circle cx="13.1" cy="12.3" r="4.3" fill="none" stroke="#707080" stroke-width="1.1"/><line x1="16.6" y1="15.9" x2="19.7" y2="19" stroke="#666" stroke-width="2"/></svg>
<div class="t" style="right:1144.8px;top:897.94px;font-size:12px;line-height:12px;color:#000;-webkit-text-stroke:0.2px #000;transform:scaleX(1.1);transform-origin:right center;">1014</div>
<svg style="position:absolute;left:784px;top:893px;" width="24" height="21" viewBox="0 0 24 21"><path d="M4.5 4.6 L4.5 0.9 L19.6 0.9 L19.6 16.6 L12.2 16.6" fill="none" stroke="#8cc88a" stroke-width="1.1"/><line x1="9.8" y1="5.2" x2="17.4" y2="5.2" stroke="#76c06f" stroke-width="1.1"/><line x1="10.8" y1="8.4" x2="17.4" y2="8.4" stroke="#76c06f" stroke-width="1.1"/><line x1="11.9" y1="11.5" x2="17.4" y2="11.5" stroke="#76c06f" stroke-width="1.1"/><path d="M0.1 17.5 L0.1 14.6 Q0.1 13.4 2.5 13.2 L4.3 13 L4.3 11.3 Q3.1 10.3 3.1 8.4 Q3.1 5.8 5.55 5.8 Q8 5.8 8 8.4 Q8 10.3 6.8 11.3 L6.8 13 L8.6 13.2 Q10.9 13.4 10.9 14.6 L10.9 17.5 Z" fill="#76c06f"/></svg>
<div class="t" style="left:889.4px;top:897.94px;font-size:12px;line-height:12px;color:#000;-webkit-text-stroke:0.2px #000;transform:scaleX(1.125);transform-origin:left center;">Faktura</div>
<div class="t" style="right:469.4000000000001px;top:897.94px;font-size:12px;line-height:12px;color:#000;-webkit-text-stroke:0.2px #000;transform:scaleX(1.137);transform-origin:right center;">6.250,00</div>
<div class="t" style="right:268.5px;top:897.94px;font-size:12px;line-height:12px;color:#000;-webkit-text-stroke:0.2px #000;transform:scaleX(1.137);transform-origin:right center;">44.374,96</div>
<div style="position:absolute;left:310px;top:920px;width:1476px;height:1px;background:repeating-linear-gradient(90deg,#666 0 2.5px,transparent 2.5px 5.5px);"></div>
<div class="t" style="left:311.5px;top:931.94px;font-size:12px;line-height:12px;color:#000;-webkit-text-stroke:0.2px #000;transform:scaleX(1.136);transform-origin:left center;">11.02.23</div>
<div class="t" style="right:1287.3px;top:930.94px;font-size:12px;line-height:12px;color:#000;-webkit-text-stroke:0.2px #000;transform:scaleX(1.13);transform-origin:right center;">50064</div>
<svg style="position:absolute;left:784px;top:927px;" width="24" height="21" viewBox="0 0 24 21"><path d="M6.5 3.4 Q8 1.2 14.5 1.3 Q22 1.4 22.8 4.3 Q22 7.5 15 7.5 Q11 7.4 9.5 6.2" fill="none" stroke="#76c06f" stroke-width="1.2"/><path d="M9.8 11 Q12 11.6 15 11.5 Q21.5 11.3 22.8 9" fill="none" stroke="#76c06f" stroke-width="1.2"/><path d="M12.5 15 Q16 15.6 18 15.3 Q22 14.6 22.8 13.6" fill="none" stroke="#76c06f" stroke-width="1.2"/><path d="M2.3 18.6 L2.3 15.2 Q2.3 13.8 4.5 13.6 L6.6 13.4 L6.6 11.8 Q5.5 11 5.5 9.2 Q5.5 7 7.6 7 Q9.7 7 9.7 9.2 Q9.7 11 8.8 11.8 L8.8 13.4 L10.8 13.6 Q12.8 14 12.8 15.2 L12.8 18.6 Z" fill="#76c06f"/></svg>
<div class="t" style="left:889.4px;top:931.94px;font-size:12px;line-height:12px;color:#000;-webkit-text-stroke:0.2px #000;transform:scaleX(1.125);transform-origin:left center;">Kundeindbetaling</div>
<div class="t" style="right:469.4000000000001px;top:931.94px;font-size:12px;line-height:12px;color:#000;-webkit-text-stroke:0.2px #000;transform:scaleX(1.137);transform-origin:right center;">-12.500,01</div>
<div class="t" style="right:268.5px;top:931.94px;font-size:12px;line-height:12px;color:#000;-webkit-text-stroke:0.2px #000;transform:scaleX(1.137);transform-origin:right center;">31.874,95</div>
<div style="position:absolute;left:310px;top:954px;width:1476px;height:2px;background:repeating-linear-gradient(90deg,#555 0 2.5px,transparent 2.5px 5.5px);"></div>
<div class="t" style="left:311.5px;top:965.94px;font-size:12px;line-height:12px;color:#000;-webkit-text-stroke:0.2px #000;transform:scaleX(1.136);transform-origin:left center;">15.02.23</div>
<div class="t" style="right:1287.3px;top:964.94px;font-size:12px;line-height:12px;color:#000;-webkit-text-stroke:0.2px #000;transform:scaleX(1.13);transform-origin:right center;">50065</div>
<svg style="position:absolute;left:784px;top:961px;" width="24" height="21" viewBox="0 0 24 21"><path d="M6.5 3.4 Q8 1.2 14.5 1.3 Q22 1.4 22.8 4.3 Q22 7.5 15 7.5 Q11 7.4 9.5 6.2" fill="none" stroke="#76c06f" stroke-width="1.2"/><path d="M9.8 11 Q12 11.6 15 11.5 Q21.5 11.3 22.8 9" fill="none" stroke="#76c06f" stroke-width="1.2"/><path d="M12.5 15 Q16 15.6 18 15.3 Q22 14.6 22.8 13.6" fill="none" stroke="#76c06f" stroke-width="1.2"/><path d="M2.3 18.6 L2.3 15.2 Q2.3 13.8 4.5 13.6 L6.6 13.4 L6.6 11.8 Q5.5 11 5.5 9.2 Q5.5 7 7.6 7 Q9.7 7 9.7 9.2 Q9.7 11 8.8 11.8 L8.8 13.4 L10.8 13.6 Q12.8 14 12.8 15.2 L12.8 18.6 Z" fill="#76c06f"/></svg>
<div class="t" style="left:889.4px;top:965.94px;font-size:12px;line-height:12px;color:#000;-webkit-text-stroke:0.2px #000;transform:scaleX(1.125);transform-origin:left center;">Kundeindbetaling</div>
<div class="t" style="right:469.4000000000001px;top:965.94px;font-size:12px;line-height:12px;color:#000;-webkit-text-stroke:0.2px #000;transform:scaleX(1.137);transform-origin:right center;">-2.100,01</div>
<div class="t" style="right:268.5px;top:965.94px;font-size:12px;line-height:12px;color:#000;-webkit-text-stroke:0.2px #000;transform:scaleX(1.137);transform-origin:right center;">29.774,94</div>
<svg style="position:absolute;left:1620px;top:595px;" width="140" height="120" viewBox="0 0 140 120"><defs><filter id="sh" x="-20%" y="-20%" width="140%" height="140%"><feGaussianBlur stdDeviation="1.2"/></filter></defs><g transform="translate(2,2)" filter="url(#sh)"><line x1="14.5" y1="105.5" x2="114" y2="27.5" stroke="#111" stroke-width="7.5" stroke-linecap="round"/><path d="M125 15.8 L106.5 19.6 L120 32.6 Z" fill="#111" stroke="#111" stroke-width="1.5" stroke-linejoin="round"/></g><line x1="14.5" y1="105.5" x2="114" y2="27.5" stroke="#fbb800" stroke-width="7.5" stroke-linecap="round"/><path d="M125 15.8 L106.5 19.6 L120 32.6 Z" fill="#fbb800" stroke="#fbb800" stroke-width="1.5" stroke-linejoin="round"/></svg>
</body></html>
